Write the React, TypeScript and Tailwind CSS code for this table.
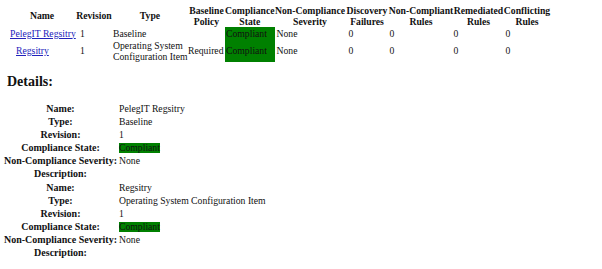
import React from 'react';

type Row = {
  name: string;
  namePad: string;
  revision: string;
  type: string[];
  policy: string;
  state: string;
  severity: string;
  h: string;
};

const rows: Row[] = [
  { name: 'PelegIT Regsitry', namePad: 'pl-[2px]', revision: '1', type: ['Baseline'], policy: '', state: 'Compliant', severity: 'None', h: 'h-[12px]' },
  { name: 'Regsitry', namePad: 'pl-[8px]', revision: '1', type: ['Operating System', 'Configuration Item'], policy: 'Required', state: 'Compliant', severity: 'None', h: 'h-[23px]' },
];

const details = [
  { name: 'PelegIT Regsitry', type: 'Baseline', revision: '1', state: 'Compliant', severity: 'None' },
  { name: 'Regsitry', type: 'Operating System Configuration Item', revision: '1', state: 'Compliant', severity: 'None' },
];

const th = 'p-0 font-bold text-center align-middle whitespace-nowrap';
// detail labels are a touch larger than the body text in the source
const label = 'p-0 text-[10px] font-bold text-center align-middle whitespace-nowrap';
const td = 'p-0 text-left align-middle whitespace-nowrap';

const DetailBlock: React.FC<{ d: (typeof details)[number]; first?: boolean }> = ({ d, first }) => (
  <table className={`border-collapse table-fixed ml-[2px] ${first ? 'mt-[12px]' : 'mt-[1px]'}`}>
    <colgroup>
      <col className="w-[117px]" />
      <col className="w-[300px]" />
    </colgroup>
    <tbody className="leading-[13px]">
      <tr>
        <th className={label}>Name:</th>
        <td className={td}>{d.name}</td>
      </tr>
      <tr>
        <th className={label}>Type:</th>
        <td className={td}>{d.type}</td>
      </tr>
      <tr>
        <th className={label}>Revision:</th>
        <td className={td}>{d.revision}</td>
      </tr>
      <tr>
        <th className={label}>Compliance State:</th>
        <td className={td}>
          <span className="bg-[#008000] leading-[10px] inline-block">{d.state}</span>
        </td>
      </tr>
      <tr>
        <th className={label}>Non-Compliance Severity:</th>
        <td className={td}>{d.severity}</td>
      </tr>
      <tr>
        <th className={label}>Description:</th>
        <td className={td}></td>
      </tr>
    </tbody>
  </table>
);

export default function App() {
  return (
    <div className="w-[602px] h-[269px] bg-white text-[#111] overflow-hidden text-[9.7px] [font-family:'Liberation_Serif',serif]">
      <table className="border-collapse table-fixed ml-[8px] mt-[4px] leading-[11px]">
        <colgroup>
          <col className="w-[68px]" />
          <col className="w-[36px]" />
          <col className="w-[76px]" />
          <col className="w-[37px]" />
          <col className="w-[49px]" />
          <col className="w-[71px]" />
          <col className="w-[43px]" />
          <col className="w-[65px]" />
          <col className="w-[50px]" />
          <col className="w-[47px]" />
        </colgroup>
        <thead>
          <tr className="h-[23px]">
            <th className={th}>Name</th>
            <th className={th}>Revision</th>
            <th className={th}>Type</th>
            <th className={th}>Baseline<br />Policy</th>
            <th className={th}>Compliance<br />State</th>
            <th className={th}>Non-Compliance<br />Severity</th>
            <th className={th}>Discovery<br />Failures</th>
            <th className={th}>Non-Compliant<br />Rules</th>
            <th className={th}>Remediated<br />Rules</th>
            <th className={th}>Conflicting<br />Rules</th>
          </tr>
        </thead>
        <tbody>
          {rows.map((r) => (
            <tr key={r.name} className={r.h}>
              <td className={`${td} ${r.namePad}`}>
                <a href="#" className="text-[#2222bb] underline">{r.name}</a>
              </td>
              <td className={`${td} pl-[4px]`}>{r.revision}</td>
              <td className={`${td} pl-[1px]`}>
                {r.type.map((t) => (
                  <div key={t}>{t}</div>
                ))}
              </td>
              <td className={td}>{r.policy}</td>
              <td className={`${td} bg-[#008000] pl-[1px]`}>{r.state}</td>
              <td className={`${td} pl-[2px]`}>{r.severity}</td>
              <td className={`${td} pl-[3px]`}>0</td>
              <td className={`${td} pl-[1px]`}>0</td>
              <td className={td}>0</td>
              <td className={`${td} pl-[2px]`}>0</td>
            </tr>
          ))}
        </tbody>
      </table>

      <h2 className="ml-[7px] mt-[12px] text-[14px] leading-[16px] font-bold">Details:</h2>

      {details.map((d, i) => (
        <DetailBlock key={d.name} d={d} first={i === 0} />
      ))}
    </div>
  );
}
